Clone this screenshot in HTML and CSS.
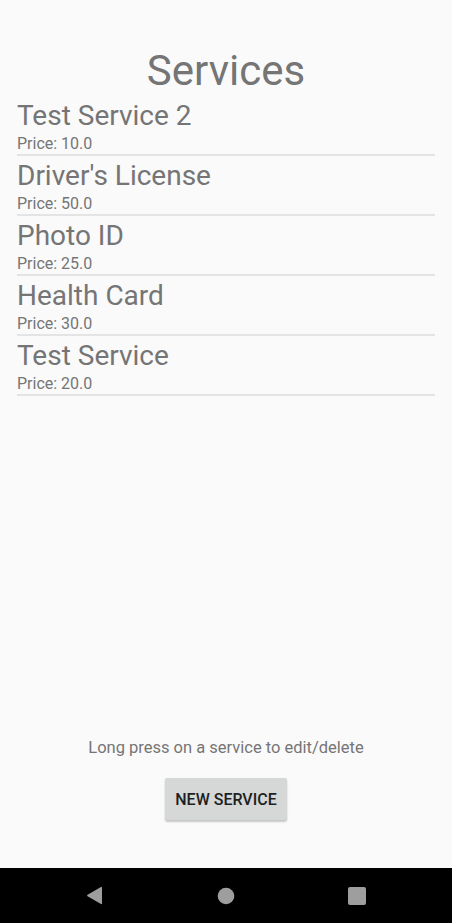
FILE: index.html
```html
<!DOCTYPE html>
<html>
<head>
<meta charset="utf-8">
<link rel="stylesheet" href="styles.css">
</head>
<body>
<div class="screen">
  <main class="content">
    <h1 class="title">Services</h1>
    <ul class="list">
      <li class="item"><div class="name">Test Service 2</div><div class="price">Price: 10.0</div></li>
      <li class="item"><div class="name">Driver's License</div><div class="price">Price: 50.0</div></li>
      <li class="item"><div class="name">Photo ID</div><div class="price">Price: 25.0</div></li>
      <li class="item"><div class="name">Health Card</div><div class="price">Price: 30.0</div></li>
      <li class="item"><div class="name">Test Service</div><div class="price">Price: 20.0</div></li>
    </ul>
    <div class="spacer"></div>
    <div class="footer">
      <p class="hint">Long press on a service to edit/delete</p>
      <button class="btn">NEW SERVICE</button>
    </div>
  </main>
  <nav class="navbar">
    <span class="slot"><svg width="18" height="19" viewBox="0 0 18 19"><path d="M16 1.5 L16 17.5 Q16 18.5 15 18 L1.5 10.2 Q0.8 9.5 1.5 8.8 L15 1 Q16 0.5 16 1.5 Z" fill="#9e9e9e"/></svg></span>
    <span class="slot"><svg width="18" height="18" viewBox="0 0 18 18"><circle cx="9" cy="9" r="8.3" fill="#9e9e9e"/></svg></span>
    <span class="slot"><svg width="18" height="18" viewBox="0 0 18 18"><rect x="0" y="0" width="18" height="18" rx="2" fill="#9e9e9e"/></svg></span>
  </nav>
</div>
</body>
</html>
```
FILE: styles.css
```css
html, body {
  margin: 0;
  padding: 0;
  background: #fafafa;
}
body {
  font-family: Roboto, "Noto Sans", sans-serif;
  color: #757575;
}
.screen {
  height: 923px;
  display: flex;
  flex-direction: column;
}
.content {
  flex: 1;
  display: flex;
  flex-direction: column;
  padding: 0 17px;
}
.title {
  margin: 47px 0 0;
  font-size: 42px;
  line-height: 48px;
  font-weight: 400;
  text-align: center;
  color: #757575;
}
.list {
  list-style: none;
  margin: 1px 0 0;
  padding: 0;
}
.item {
  padding-top: 3px;
  border-bottom: 2px solid #e4e4e4;
}
.name {
  font-size: 28px;
  line-height: 34px;
}
.price {
  font-size: 16px;
  line-height: 20px;
  margin-top: 1px;
}
.spacer {
  flex: 1;
}
.footer {
  display: flex;
  flex-direction: column;
  align-items: center;
  margin-bottom: 48px;
}
.hint {
  margin: 0;
  font-size: 16.5px;
  line-height: 20px;
  color: #757575;
}
.btn {
  margin-top: 20px;
  width: 122px;
  height: 42px;
  border: none;
  border-radius: 2px;
  background: #d6d7d7;
  color: #1f1f1f;
  font-family: Roboto, sans-serif;
  font-weight: 500;
  font-size: 16px;
  padding: 0;
  box-shadow: 0 2px 2px rgba(0,0,0,0.2), 0 0 1px rgba(0,0,0,0.12);
}
.navbar {
  height: 55px;
  background: #000;
  display: flex;
  justify-content: center;
  align-items: center;
  gap: 107px;
}
.slot {
  width: 24px;
  display: flex;
  justify-content: center;
}
.slot svg {
  display: block;
}
```
